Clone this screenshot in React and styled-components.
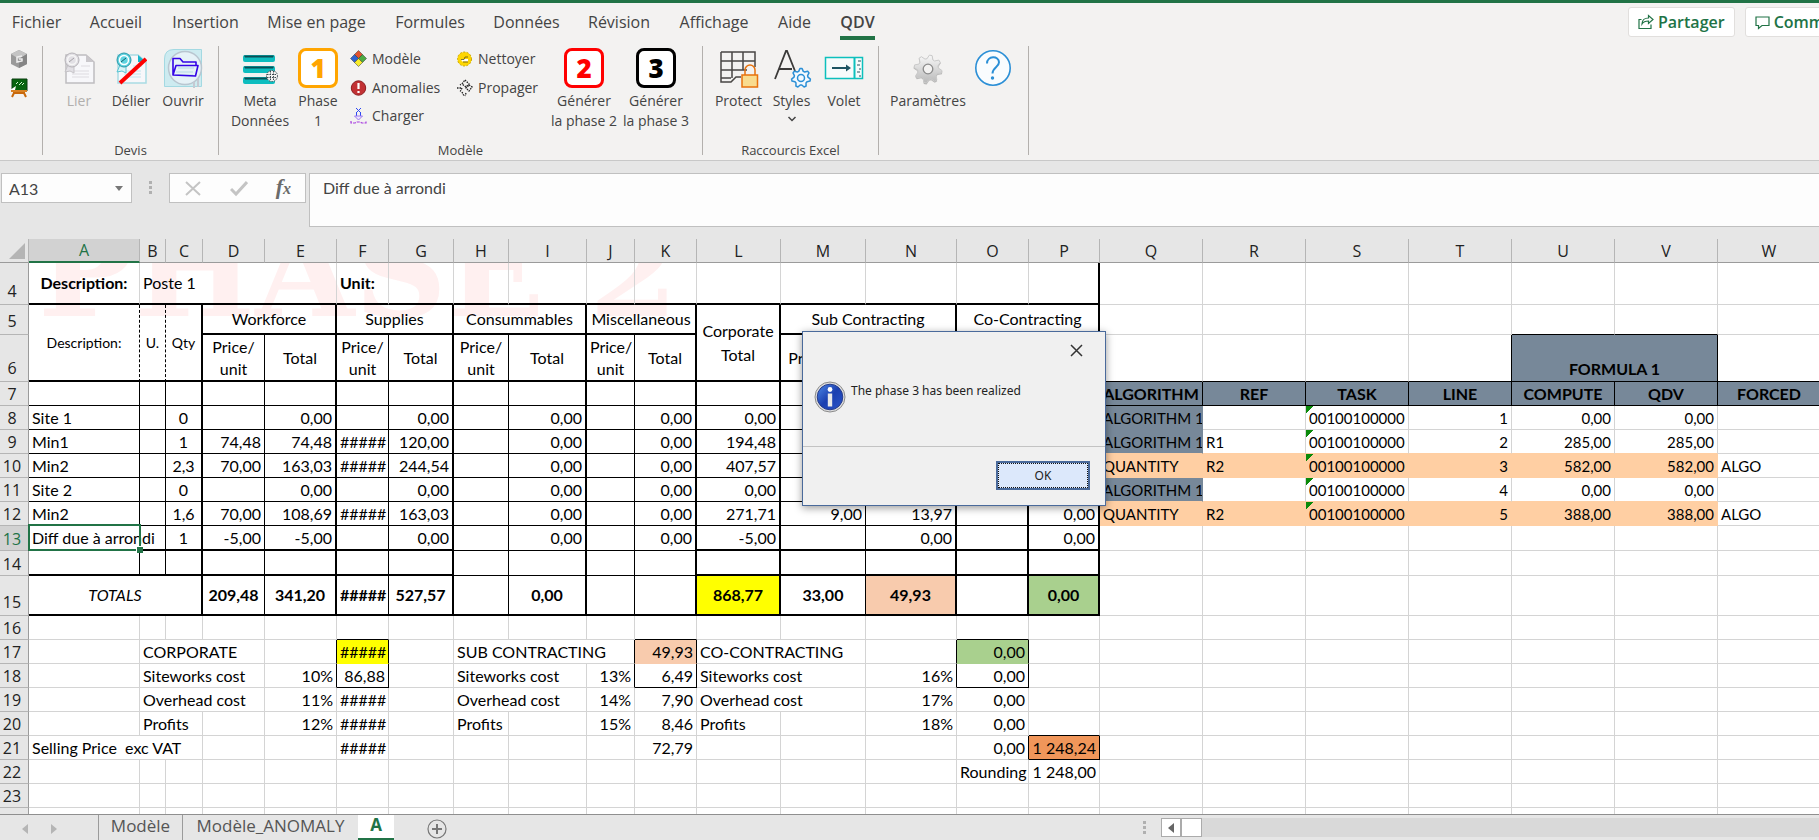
import React from "react";
import styled, { createGlobalStyle, css } from "styled-components";

const GlobalStyle = createGlobalStyle`
  * {
    box-sizing: border-box;
  }
  body {
    margin: 0;
    overflow: hidden;
    font-family: "Open Sans", "Noto Sans", sans-serif;
    color: #444444;
  }
  button,
  input,
  textarea {
    font: inherit;
    color: inherit;
    margin: 0;
    padding: 0;
    border: 0;
    background: none;
    outline: none;
  }
`;

const Window = styled.div`
  position: relative;
  display: flex;
  flex-direction: column;
  height: 100vh;
  background: #e6e6e6;
  overflow: hidden;
`;

/* ---------- ribbon ---------- */

const Ribbon = styled.header`
  flex-shrink: 0;
  height: 161px;
  border-top: 3px solid #217346;
  border-bottom: 1px solid #c8c8c8;
  background: #f3f2f1;
`;

const MenuBar = styled.div`
  display: flex;
  height: 43px;
  overflow: hidden;
`;

const MenuTab = styled.button`
  flex-shrink: 0;
  width: ${(p) => p.$w}px;
  height: 37px;
  font-size: 16px;
  line-height: 36px;
  white-space: nowrap;
  text-align: center;
  span {
    display: inline-block;
    height: 36px;
    ${(p) =>
      p.$active &&
      css`
        font-weight: 600;
        border-bottom: 4px solid #217346;
      `}
  }
`;

const ShareArea = styled.div`
  display: flex;
  flex-shrink: 0;
  gap: 10px;
  width: 191px;
  margin-left: auto;
  padding-top: 4px;
`;

const ShareButton = styled.button`
  display: flex;
  flex-shrink: 0;
  align-items: center;
  gap: 4px;
  height: 30px;
  padding: 0 9px;
  border: 1px solid #e1dfdd;
  border-radius: 3px;
  background: #ffffff;
  color: #217346;
  font-size: 16px;
  font-weight: 600;
  line-height: 20px;
`;

const RibbonBody = styled.div`
  display: flex;
  height: 109px;
`;

const Group = styled.section`
  display: flex;
  flex-direction: column;
  flex-shrink: 0;
  width: ${(p) => p.$w}px;
  border-right: 1px solid #b3b0ad;
  h2 {
    height: 13px;
    margin: auto 0 0;
    font-size: 13px;
    font-weight: 400;
    line-height: 16px;
    text-align: center;
  }
`;

const Tools = styled.div`
  display: flex;
  height: 86px;
  padding-left: ${(p) => p.$pad}px;
`;

const BigTool = styled.button`
  display: flex;
  flex-direction: column;
  flex-shrink: 0;
  align-items: center;
  width: ${(p) => p.$w}px;
  font-size: 14px;
  line-height: 20px;
  white-space: nowrap;
  color: ${(p) => (p.$off ? "#b1afad" : "#444444")};
  svg {
    flex-shrink: 0;
  }
`;

const IconSlot = styled.span`
  display: flex;
  align-items: center;
  justify-content: center;
  height: 44px;
  margin-bottom: 1px;
`;

const SmallColumn = styled.div`
  display: flex;
  flex-direction: column;
  flex-shrink: 0;
  width: ${(p) => p.$w}px;
`;

const SmallTool = styled.button`
  display: flex;
  align-items: center;
  gap: 4px;
  height: 29px;
  padding-bottom: 3px;
  font-size: 14px;
  line-height: 20px;
  white-space: nowrap;
`;

/* ---------- formula bar ---------- */

const FormulaBar = styled.div`
  display: flex;
  flex-shrink: 0;
  align-items: flex-start;
  height: 78px;
  padding: 12px 0 12px 1px;
  font-family: Lato, sans-serif;
  font-size: 16px;
`;

const NameBox = styled.label`
  display: flex;
  align-items: center;
  width: 131px;
  height: 30px;
  padding: 0 8px 0 7px;
  border: 1px solid #c0c0c0;
  background: #fdfdfd;
  input {
    flex: 1;
    min-width: 0;
  }
`;

const Grip = styled.svg`
  margin: 0 16px;
`;

const FxBox = styled.div`
  display: flex;
  justify-content: space-around;
  align-items: center;
  width: 137px;
  height: 30px;
  margin-right: 3px;
  border: 1px solid #c0c0c0;
  background: #fdfdfd;
  button {
    height: 24px;
    line-height: 0;
  }
  i {
    font-family: "Liberation Serif", serif;
    font-size: 22px;
    font-weight: 700;
    line-height: 22px;
    color: #6b6b6b;
  }
  sub {
    font-size: 16px;
    vertical-align: baseline;
  }
`;

const FormulaInput = styled.textarea`
  flex: 1;
  height: 54px;
  padding: 4px 13px;
  border: 1px solid #c0c0c0;
  border-right: 0;
  background: #fdfdfd;
  line-height: 20px;
  resize: none;
`;

/* ---------- sheet ---------- */

const SheetArea = styled.main`
  position: relative;
  flex: 1;
  min-height: 0;
  overflow: hidden;
  background: #ffffff;
  font-family: Lato, sans-serif;
  font-size: 16px;
  color: #000000;
`;

const Watermark = styled.div`
  position: absolute;
  top: 24px;
  left: 38px;
  height: 54px;
  overflow: hidden;
  font-family: "DejaVu Serif", serif;
  font-size: 128px;
  font-weight: 700;
  line-height: 16px;
  white-space: nowrap;
  color: #fff0f0;
`;

/* fixed layout with a tiny width: the columns alone set the table's width */
const Grid = styled.table`
  position: relative;
  width: 1px;
  table-layout: fixed;
  border-collapse: separate;
  border-spacing: 0;
  line-height: 20px;
`;

const ColHead = styled.th`
  height: 24px;
  padding: 0;
  border-right: 1px solid #b5b5b5;
  border-bottom: 1px solid #9b9b9b;
  background: #e6e6e6;
  color: #222222;
  font-family: "Open Sans", "Noto Sans", sans-serif;
  font-size: 16px;
  font-weight: 400;
  line-height: 20px;
  ${(p) =>
    p.$active &&
    css`
      background: #d2d2d2;
      color: #217346;
      border-bottom: 2px solid #217346;
    `}
`;

const Corner = styled(ColHead)`
  text-align: right;
  line-height: 0;
  padding-right: 3px;
`;

const RowHead = styled.th`
  height: ${(p) => p.$h}px;
  padding: 0 4px ${(p) => (p.$h >= 30 ? 2 : 0)}px 0;
  overflow: hidden;
  border-right: 1px solid #9b9b9b;
  border-bottom: 1px solid #b5b5b5;
  background: ${(p) => (p.$active ? "#d2d2d2" : "#e6e6e6")};
  color: ${(p) => (p.$active ? "#217346" : "#222222")};
  font-family: "Open Sans", "Noto Sans", sans-serif;
  font-size: 16px;
  font-weight: 400;
  line-height: ${(p) => (p.$h < 20 ? 4 : 22)}px;
  vertical-align: bottom;
`;

const LINES = {
  grid: "1px solid #d4d4d4",
  thin: "1px solid #000000",
  thick: "2px solid #000000",
  dash: "1px dashed #000000",
};

const line = (kind) => LINES[kind] || `1px solid ${kind}`;

const Cell = styled.td`
  position: relative;
  padding: 0 3px ${(p) => (p.$valign === "bottom" ? 2 : 0)}px;
  overflow: ${(p) => (p.$spill ? "visible" : "hidden")};
  border-right: ${(p) => line(p.$r)};
  border-bottom: ${(p) => line(p.$b)};
  background-color: ${(p) => p.$bg || "transparent"};
  text-align: ${(p) => p.$align || "left"};
  vertical-align: ${(p) => p.$valign || "middle"};
  white-space: pre;
  z-index: ${(p) => (p.$spill ? 2 : "auto")};
  font-weight: ${(p) => (p.$bold ? 700 : 400)};
  font-style: ${(p) => (p.$italic ? "italic" : "normal")};
  font-size: ${(p) => p.$size || 16}px;
  line-height: ${(p) => p.$lh || 20}px;
  ${(p) =>
    p.$flag &&
    css`
      background-image: linear-gradient(135deg, #0a8a0a 5px, transparent 5px);
    `}
`;

const Selection = styled.span`
  position: absolute;
  inset: -2px -2px -2px -1px;
  border: 2px solid #217346;
  &::after {
    content: "";
    position: absolute;
    right: -4px;
    bottom: -4px;
    width: 6px;
    height: 6px;
    border: 1px solid #ffffff;
    border-width: 1px 0 0 1px;
    background: #217346;
  }
`;

/* ---------- sheet tabs ---------- */

const TabBar = styled.footer`
  display: flex;
  flex-shrink: 0;
  height: 26px;
  border-top: 1px solid #8f8f8f;
`;

const TabArrows = styled.div`
  display: flex;
  align-items: center;
  justify-content: space-between;
  width: 98px;
  padding: 2px 41px 0 22px;
  button {
    line-height: 0;
  }
`;

const SheetTab = styled.button`
  height: 25px;
  width: ${(p) => p.$w}px;
  padding-bottom: 4px;
  border-left: ${(p) => (p.$active ? 0 : "1px solid #9b9b9b")};
  border-bottom: ${(p) => (p.$active ? "2px solid #217346" : 0)};
  background: ${(p) => (p.$active ? "#ffffff" : "transparent")};
  color: ${(p) => (p.$active ? "#217346" : "#555555")};
  font-size: 17px;
  font-weight: ${(p) => (p.$active ? 700 : 400)};
  line-height: 18px;
  white-space: nowrap;
`;

const AddTab = styled.button`
  width: 86px;
  line-height: 0;
  padding-top: 2px;
`;

const Scroller = styled.div`
  display: flex;
  align-items: center;
  width: 677px;
  margin-left: auto;
`;

const ScrollArrow = styled.button`
  width: 20px;
  height: 19px;
  border: 1px solid #ababab;
  background: #ffffff;
  line-height: 0;
`;

const Track = styled.div`
  flex: 1;
  height: 19px;
  background: #d9d9d9;
`;

const Thumb = styled.div`
  width: 21px;
  height: 19px;
  border: 1px solid #ababab;
  background: #ffffff;
`;

/* ---------- message box ---------- */

const Dialog = styled.div`
  position: absolute;
  top: 331px;
  left: 802px;
  z-index: 5;
  display: flex;
  flex-direction: column;
  width: 304px;
  height: 175px;
  border: 1px solid #4a6a9b;
  background: #f0f0f0;
  box-shadow: 0 2px 8px rgba(0, 0, 0, 0.4);
  font-family: "Noto Sans", sans-serif;
  font-size: 12px;
  color: #222222;
`;

const DialogTop = styled.div`
  display: flex;
  justify-content: flex-end;
  height: 49px;
  padding: 12px 22px 0 0;
  button {
    height: 13px;
    line-height: 0;
  }
`;

const DialogMessage = styled.div`
  display: flex;
  gap: 5px;
  height: 65px;
  padding-left: 11px;
  p {
    margin: 2px 0 0;
    line-height: 16px;
  }
`;

const DialogFooter = styled.div`
  display: flex;
  flex: 1;
  justify-content: flex-end;
  align-items: flex-start;
  padding: 14px 15px 0 0;
  border-top: 1px solid #c3c3c3;
`;

const OkButton = styled.button`
  width: 94px;
  height: 29px;
  border: 2px solid #4a6a9b;
  background: #dce8fb;
  outline: 1px dotted #111111;
  outline-offset: -3px;
`;

/* ---------- icons ---------- */

const HexIcon = () => (
  <svg width="18" height="20" viewBox="0 0 18 20">
    <path d="M9 1l8 4v10l-8 4-8-4V5z" fill="#9a9a9a" />
    <path d="M9 1l8 4-8 5-8-5z" fill="#c4c4c4" />
    <path d="M9 10l8-5v10l-8 4z" fill="#858585" />
    <path d="M12 7L7 8v5l5-1v-2H9" fill="none" stroke="#eeeeee" strokeWidth="1.5" />
  </svg>
);

const BoardIcon = () => (
  <svg width="18" height="20" viewBox="0 0 18 20">
    <path d="M5 13l-3 6M13 13l3 6M3 15h12" stroke="#c8690c" strokeWidth="2" />
    <path d="M2 1h15v12H2z" fill="#07650f" stroke="#0b3f10" />
    <path d="M6 6l2-2M9 7l3-3M12 7l2-2" stroke="#d7f5d7" />
    <path d="M0 12l6-4-1 4z" fill="#ffffff" />
    <path d="M1 13h16" stroke="#d98223" strokeWidth="2" />
  </svg>
);

const PageIcon = ({ color, cut }) => (
  <svg width="32" height="34" viewBox="0 0 32 34">
    <path d="M3 4h20l8 7v21H3z" fill="#f7f7fa" stroke={color ? "#a9dbe4" : "#bfbdc0"} strokeWidth="1.5" />
    <path d="M23 4v7h8z" fill={color ? "#17b5c9" : "#c9c7cb"} />
    <path d="M9 20h17M9 23h17M9 26h17M18 15h9" stroke={color ? "#c3e4ec" : "#dddbe0"} />
    <path d="M5 14l-3 7 5-1 4 2V14z" fill={color ? "#d9f3f6" : "#e2e0e5"} stroke={color ? "#58c4d2" : "#c5c3c7"} />
    <circle cx="9" cy="9" r="7" fill={color ? "#5fd3e0" : "#e2e0e5"} stroke={color ? "#2a98a8" : "#b5b3b7"} />
    <circle cx="9" cy="9" r="4.5" fill="none" stroke={color ? "#ffffff" : "#f6f6f6"} strokeWidth="1.5" />
    <path d="M6 11l5-4" stroke={color ? "#14606c" : "#a5a3a7"} />
    {cut && <path d="M5 32L31 8" stroke="#fe0000" strokeWidth="4" />}
  </svg>
);

const OpenIcon = () => (
  <svg width="40" height="40" viewBox="0 0 40 40">
    <path d="M1.5 38.5V11Q1.5 1.5 11 1.5H38.5V38.5z" fill="#cdebf0" stroke="#a3d9e2" />
    <circle cx="22" cy="20" r="16.5" fill="#e6f2f7" stroke="#b9c6d0" strokeWidth="1.5" />
    <path d="M31 34v6M35 30v9" stroke="#c5c9d2" strokeWidth="2" />
    <path d="M13 24h17M15 20h16M12 27h18" stroke="#b5d9e6" />
    <path d="M10 27V10.5h7l3 3.5h13v3.5M10 27l3-9.5h22L32.5 28z" fill="none" stroke="#3404e6" strokeWidth="1.6" strokeLinejoin="round" />
  </svg>
);

const MetaIcon = () => (
  <svg width="36" height="36" viewBox="0 0 36 36">
    {[5, 16, 27].map((y) => (
      <g key={y}>
        <rect x="1" y={y} width="32" height="7" rx="2" fill="#0dbdbf" />
        <path d={`M2 ${y + 0.5}h30l-1 2H3z`} fill="#0b4f56" />
      </g>
    ))}
    <circle cx="30" cy="26" r="5.5" fill="#f3f2f1" stroke="#3e4a50" strokeDasharray="1.5 1" />
    <path d="M25 24.5h10M25 27.5h10M28.5 21v10M31.5 21v10" stroke="#3e4a50" strokeDasharray="1.5 1" />
  </svg>
);

const NumberBadge = styled.span`
  display: flex;
  align-items: center;
  justify-content: center;
  width: 40px;
  height: 40px;
  border: 3px solid ${(p) => p.$c};
  border-radius: 8px;
  background: #ffffff;
  color: ${(p) => p.$c};
  font-size: 26px;
  font-weight: 800;
  line-height: 32px;
`;

const DiamondsIcon = () => (
  <svg width="18" height="18" viewBox="0 0 18 18">
    <g stroke="#333333" strokeWidth="0.5">
      <path d="M8.5 0.5l4 4-4 4-4-4z" fill="#e2532e" />
      <path d="M4.500 4.500l4 4-4 4-4-4z" fill="#2f62cf" />
      <path d="M12.5 4.5l4 4-4 4-4-4z" fill="#4caa43" />
      <path d="M8.5 8.5l4 4-4 4-4-4z" fill="#f7ec2d" />
    </g>
  </svg>
);

const AlertIcon = () => (
  <svg width="18" height="18" viewBox="0 0 18 18">
    <circle cx="8.5" cy="9" r="7.2" fill="#c23134" stroke="#8d1d20" />
    <path d="M8.5 4v6M8.5 12v2" stroke="#ffffff" strokeWidth="2.2" />
  </svg>
);

const LoadIcon = () => (
  <svg width="18" height="18" viewBox="0 0 18 18">
    <path d="M6 1l5 5M11 1L6 6M6.5 6v3M10.5 6v3" stroke="#2d49f2" fill="none" />
    <path d="M4.5 9h8l-4 4z" fill="#ece4fc" stroke="#9a78ef" />
    <path d="M1 14v2h4l2-1h3l2 1h4v-2" stroke="#a83ee0" fill="none" strokeWidth="1.2" strokeDasharray="3 1" />
  </svg>
);

const CleanIcon = () => (
  <svg width="18" height="18" viewBox="0 0 18 18">
    <circle cx="8.5" cy="9" r="7" fill="#fed602" stroke="#c9a600" strokeDasharray="2 1.5" />
    <path d="M5 9h7v2.5H6z" fill="#ffffff" />
    <path d="M5 9.5h3l1-2.500h3M7 12h5" fill="none" stroke="#5b4f14" strokeWidth="0.8" />
  </svg>
);

const SpreadIcon = () => (
  <svg width="18" height="18" viewBox="0 0 18 18">
    <g fill="none" stroke="#222222" strokeWidth="1.3" strokeDasharray="1.5 1">
      <path d="M9 1l4 4-3 3-4-3zM13 6l3 2-3 4-3-3zM7 4L4 6" />
      <path d="M1 9h5l-2 4M6 13l2 4M10 14l-1 3" />
    </g>
  </svg>
);

const ProtectIcon = () => (
  <svg width="40" height="40" viewBox="0 0 40 40">
    <path d="M2 4h34v15M2 4v30h10l5-5h5M2 13h34M2 22h26M2 30h10M13 4v26M24 4v18" fill="none" stroke="#484644" strokeWidth="1.5" />
    <path d="M26 27v-5a5 5 0 0 1 10 0v5" fill="none" stroke="#e8720c" strokeWidth="1.5" />
    <rect x="23" y="27" width="15.5" height="12" fill="#f9dc8f" stroke="#e8720c" strokeWidth="1.5" />
  </svg>
);

const gearPath = (cx, cy, r, teeth) => {
  const points = [];
  for (let i = 0; i < teeth * 4; i += 1) {
    const a = ((i + 0.5) * Math.PI * 2) / (teeth * 4);
    const d = i % 4 < 2 ? r : r * 0.74;
    points.push(`${(cx + d * Math.cos(a)).toFixed(1)},${(cy + d * Math.sin(a)).toFixed(1)}`);
  }
  return points.join(" ");
};

const StylesIcon = () => (
  <svg width="40" height="40" viewBox="0 0 40 40">
    <path d="M3 31L14 3h1l8 20M7.5 21H20" fill="none" stroke="#3b3a39" strokeWidth="1.8" />
    <polygon points={gearPath(29, 30, 9.5, 7)} fill="#f3f9fe" stroke="#2b8fd6" strokeWidth="1.5" strokeLinejoin="round" />
    <circle cx="29" cy="30" r="3.5" fill="none" stroke="#2b8fd6" strokeWidth="1.5" />
  </svg>
);

const PaneIcon = () => (
  <svg width="40" height="40" viewBox="0 0 40 40">
    <path d="M1.5 9.5h37v21h-37z" fill="#f7fbfb" stroke="#0cc0bd" strokeWidth="1.5" />
    <path d="M30.5 9.5v21" stroke="#0cc0bd" strokeWidth="2" />
    <path d="M34 13h3M33 17h3M35 21h2M33 24h3M35 28h2" stroke="#24505f" strokeWidth="1.2" />
    <path d="M8 20h16" stroke="#1d5563" strokeWidth="2" />
    <path d="M22 16.5l5 3.5-5 3.5z" fill="#1d5563" />
  </svg>
);

const GearIcon = () => (
  <svg width="34" height="36" viewBox="0 0 34 36">
    <defs>
      <linearGradient id="steel" x1="0" y1="0" x2="0" y2="1">
        <stop offset="0" stopColor="#f8f8f8" />
        <stop offset="1" stopColor="#b9b9b9" />
      </linearGradient>
    </defs>
    <polygon points={gearPath(17, 20, 14.5, 8)} fill="#8f8f8f" opacity="0.6" />
    <polygon points={gearPath(17, 19, 14, 8)} fill="url(#steel)" stroke="#cacaca" strokeLinejoin="round" />
    <circle cx="17" cy="19" r="4.8" fill="#f3f2f1" stroke="#8b8b8b" strokeWidth="1.3" />
  </svg>
);

const HelpIcon = () => (
  <svg width="38" height="38" viewBox="0 0 38 38">
    <circle cx="19" cy="19" r="17.2" fill="#f9fcfe" stroke="#2b8fd6" strokeWidth="1.6" />
    <path d="M13 14.5c0-8 12-8 12-1.2 0 5-6.5 5.2-6.5 11.2" fill="none" stroke="#2b8fd6" strokeWidth="2" />
    <circle cx="18.5" cy="29" r="1.7" fill="#2b8fd6" />
  </svg>
);

const ShareIcon = () => (
  <svg width="16" height="16" viewBox="0 0 16 16" fill="none" stroke="#217346" strokeWidth="1.2">
    <path d="M3.5 5.5H1v9h12v-4" />
    <path d="M4 10c0-4 3-6 6.5-6V1.5L15 5.5l-4.5 4V7C8 7 5.5 7.5 4 10z" />
  </svg>
);

const CommentIcon = () => (
  <svg width="15" height="15" viewBox="0 0 15 15" fill="none" stroke="#217346" strokeWidth="1.2">
    <path d="M1 2h13v8.5H7L3.5 13.5v-3H1z" />
  </svg>
);

const InfoIcon = () => (
  <svg width="32" height="32" viewBox="0 0 32 32">
    <defs>
      <linearGradient id="blue" x1="0" y1="0" x2="1" y2="1">
        <stop offset="0" stopColor="#4f8ae8" />
        <stop offset="0.5" stopColor="#1b3fb0" />
        <stop offset="1" stopColor="#2b55c9" />
      </linearGradient>
    </defs>
    <circle cx="16" cy="16" r="15" fill="#dcdcdc" stroke="#8c8c8c" />
    <circle cx="16" cy="16" r="12.8" fill="url(#blue)" stroke="#2a3f8c" />
    <circle cx="16" cy="8.5" r="2.4" fill="#ffffff" />
    <path d="M16 12.5v13" stroke="#e9e9e9" strokeWidth="4.4" />
  </svg>
);

const Triangle = ({ left, size = 10, color = "#b5b5b5" }) => (
  <svg width={size - 4} height={size} viewBox="0 0 6 10">
    <path d={left ? "M6 0v10L0 5z" : "M0 0v10l6-5z"} fill={color} />
  </svg>
);

const Dots = () => (
  <Grip width="5" height="30" viewBox="0 0 5 30">
    <path d="M1 8h3v3H1zM1 13h3v3H1zM1 18h3v3H1z" fill="#b0b0b0" />
  </Grip>
);

/* ---------- data ---------- */

const MENU = [
  ["Fichier", 73],
  ["Accueil", 86],
  ["Insertion", 93],
  ["Mise en page", 129],
  ["Formules", 98],
  ["Données", 95],
  ["Révision", 90],
  ["Affichage", 100],
  ["Aide", 61],
  ["QDV", 65],
];

const COLUMNS = [
  ["A", 111, "thin"],
  ["B", 26, "thin"],
  ["C", 37, "thick"],
  ["D", 62, "thin"],
  ["E", 72, "thick"],
  ["F", 52, "thin"],
  ["G", 65, "thick"],
  ["H", 55, "thin"],
  ["I", 78, "thick"],
  ["J", 48, "thin"],
  ["K", 62, "thick"],
  ["L", 84, "thick"],
  ["M", 85, "thin"],
  ["N", 91, "thick"],
  ["O", 72, "thick"],
  ["P", 71, "thick"],
  ["Q", 103],
  ["R", 103],
  ["S", 103],
  ["T", 103],
  ["U", 103],
  ["V", 103],
  ["W", 103],
];

const LETTERS = COLUMNS.map(([name]) => name);
const SLATE = "#778899";
const ORANGE = "#ffcfa3";
const YELLOW = "#ffff00";
const PEACH = "#f8cbad";
const GREEN = "#a9d08e";

const right = { align: "right" };
const center = { align: "center" };
const bold = { align: "center", bold: true };

// Costing table on the left: every cell is framed, per column.
const framed = (cells, bottom) => {
  const out = {};
  COLUMNS.slice(0, 16).forEach(([name, , edge]) => {
    const align = name === "A" ? "left" : name === "C" ? "center" : "right";
    out[name] = { align, r: edge, b: bottom(name), t: cells[name] };
  });
  return out;
};

const thinLine = () => "thin";
const closingLine = (name) => ("HIJK".includes(name) ? "thin" : "thick");

// Control table on the right of the sheet.
const control = (algo, ref, number, value, forced) => {
  const bg = forced ? ORANGE : undefined;
  const r = forced ? ORANGE : "grid";
  const fill = { bg, r, b: r, size: 15 };
  return {
    Q: { t: algo, size: 15, bg: bg || SLATE, r: bg || SLATE, b: bg || SLATE },
    R: { t: ref, ...fill },
    S: { t: "00100100000", flag: true, ...fill },
    T: { t: number, ...fill, ...right },
    U: { t: value, ...fill, ...right },
    V: { t: value, ...fill, ...right },
    W: { t: forced ? "ALGO" : "", size: 15 },
  };
};

// A control row that sits on top of an orange one shares its bottom line.
const aboveOrange = (cells) => {
  const out = { ...cells };
  "QRSTUV".split("").forEach((k) => {
    out[k] = { ...out[k], b: ORANGE };
  });
  return out;
};

const priceUnit = { t: "Price/\nunit", align: "center", lh: 22, b: "thick" };
const total = { t: "Total", align: "center", b: "thick" };
const slateHead = (t) => ({ t, bg: SLATE, r: "thin", b: "thin", ...bold });

const row4 = {
  A: { t: "Description:", ...bold },
  B: { t: "Poste 1", span: 4 },
  F: { t: "Unit:", bold: true },
};
LETTERS.slice(0, 16).forEach((k) => {
  row4[k] = { ...row4[k], b: "thick" };
});
row4.P.r = "thick";

const ROWS = [
  { n: 4, h: 42, cells: row4 },
  {
    n: 5,
    h: 30,
    cells: {
      A: { t: "Description:", rows: 2, size: 14, r: "dash", b: "thick", ...center },
      B: { t: "U.", rows: 2, size: 14, r: "dash", b: "thick", ...center },
      C: { t: "Qty", rows: 2, size: 14, r: "thick", b: "thick", ...center },
      D: { t: "Workforce", span: 2, r: "thick", b: "thick", ...center },
      F: { t: "Supplies", span: 2, r: "thick", b: "thick", ...center },
      H: { t: "Consummables", span: 2, r: "thick", b: "thick", ...center },
      J: { t: "Miscellaneous", span: 2, r: "thick", b: "thick", ...center },
      L: { t: "Corporate\nTotal", rows: 2, r: "thick", b: "thick", lh: 24, ...center },
      M: { t: "Sub Contracting", span: 2, r: "thick", b: "thick", ...center },
      O: { t: "Co-Contracting", span: 2, r: "thick", b: "thick", ...center },
      U: { b: "thin" },
      V: { b: "thin" },
    },
  },
  {
    n: 6,
    h: 47,
    skip: "ABCL",
    cells: {
      D: { ...priceUnit, r: "thin" },
      E: { ...total, r: "thick" },
      F: { ...priceUnit, r: "thin" },
      G: { ...total, r: "thick" },
      H: { ...priceUnit, r: "thin" },
      I: { ...total, r: "thick" },
      J: { ...priceUnit, r: "thin" },
      K: { ...total, r: "thick" },
      M: { t: "Price/unit", align: "center", r: "thin", b: "thick" },
      N: { r: "thick", b: "thick" },
      O: { r: "thick", b: "thick" },
      P: { r: "thick", b: "thick" },
      Q: { b: "thin" },
      R: { b: "thin" },
      S: { b: "thin" },
      T: { r: "thin", b: "thin" },
      U: { t: "FORMULA 1", span: 2, bg: SLATE, r: "thin", b: "thin", valign: "bottom", ...bold },
      W: { b: "thin" },
    },
  },
  {
    n: 7,
    h: 24,
    cells: {
      ...framed({}, thinLine),
      Q: slateHead("ALGORITHM"),
      R: slateHead("REF"),
      S: slateHead("TASK"),
      T: slateHead("LINE"),
      U: slateHead("COMPUTE"),
      V: slateHead("QDV"),
      W: slateHead("FORCED"),
    },
  },
  {
    n: 8,
    h: 24,
    cells: {
      ...framed({ A: "Site 1", C: "0", E: "0,00", G: "0,00", I: "0,00", K: "0,00", L: "0,00" }, thinLine),
      ...control("ALGORITHM 1", "", "1", "0,00"),
    },
  },
  {
    n: 9,
    h: 24,
    cells: {
      ...framed(
        { A: "Min1", C: "1", D: "74,48", E: "74,48", F: "#####", G: "120,00", I: "0,00", K: "0,00", L: "194,48" },
        thinLine
      ),
      ...aboveOrange(control("ALGORITHM 1", "R1", "2", "285,00")),
    },
  },
  {
    n: 10,
    h: 24,
    cells: {
      ...framed(
        { A: "Min2", C: "2,3", D: "70,00", E: "163,03", F: "#####", G: "244,54", I: "0,00", K: "0,00", L: "407,57" },
        thinLine
      ),
      ...control("QUANTITY", "R2", "3", "582,00", true),
    },
  },
  {
    n: 11,
    h: 24,
    cells: {
      ...framed({ A: "Site 2", C: "0", E: "0,00", G: "0,00", I: "0,00", K: "0,00", L: "0,00" }, thinLine),
      ...aboveOrange(control("ALGORITHM 1", "", "4", "0,00")),
    },
  },
  {
    n: 12,
    h: 24,
    cells: {
      ...framed(
        {
          A: "Min2",
          C: "1,6",
          D: "70,00",
          E: "108,69",
          F: "#####",
          G: "163,03",
          I: "0,00",
          K: "0,00",
          L: "271,71",
          M: "9,00",
          N: "13,97",
          P: "0,00",
        },
        thinLine
      ),
      ...control("QUANTITY", "R2", "5", "388,00", true),
    },
  },
  {
    n: 13,
    h: 25,
    cells: {
      ...framed(
        { C: "1", D: "-5,00", E: "-5,00", G: "0,00", I: "0,00", K: "0,00", L: "-5,00", N: "0,00", P: "0,00" },
        closingLine
      ),
      A: { t: "Diff due à arrondi", selected: true, r: "thin", b: "thick" },
    },
  },
  { n: 14, h: 25, cells: framed({}, closingLine) },
  {
    n: 15,
    h: 40,
    cells: {
      A: { t: "TOTALS", span: 3, italic: true, r: "thick", b: "thick", ...center },
      D: { t: "209,48", r: "thin", b: "thick", ...bold },
      E: { t: "341,20", r: "thick", b: "thick", ...bold },
      F: { t: "#####", r: "thin", b: "thick", ...bold },
      G: { t: "527,57", r: "thick", b: "thick", ...bold },
      H: { r: "thin", b: "thick" },
      I: { t: "0,00", r: "thick", b: "thick", ...bold },
      J: { r: "thin", b: "thick" },
      K: { r: "thick", b: "thick" },
      L: { t: "868,77", bg: YELLOW, r: "thick", b: "thick", ...bold },
      M: { t: "33,00", r: "thin", b: "thick", ...bold },
      N: { t: "49,93", bg: PEACH, r: "thick", b: "thick", ...bold },
      O: { r: "thick", b: "thick" },
      P: { t: "0,00", bg: GREEN, r: "thick", b: "thick", ...bold },
    },
  },
  { n: 16, h: 24, cells: { F: { b: "thin" }, K: { b: "thin" }, O: { b: "thin" } } },
  {
    n: 17,
    h: 24,
    cells: {
      B: { t: "CORPORATE", span: 3 },
      E: { r: "thin" },
      F: { t: "#####", bg: YELLOW, r: "thin", b: YELLOW, ...right },
      H: { t: "SUB CONTRACTING", span: 3, r: "thin" },
      K: { t: "49,93", bg: PEACH, r: "thin", b: PEACH, ...right },
      L: { t: "CO-CONTRACTING", span: 2 },
      N: { r: "thin" },
      O: { t: "0,00", bg: GREEN, r: "thin", b: GREEN, ...right },
    },
  },
  {
    n: 18,
    h: 24,
    cells: {
      B: { t: "Siteworks cost", span: 3 },
      E: { t: "10%", r: "thin", ...right },
      F: { t: "86,88", r: "thin", b: "thin", ...right },
      H: { t: "Siteworks cost", span: 2 },
      J: { t: "13%", r: "thin", ...right },
      K: { t: "6,49", r: "thin", b: "thin", ...right },
      L: { t: "Siteworks cost", span: 2 },
      N: { t: "16%", r: "thin", ...right },
      O: { t: "0,00", r: "thin", b: "thin", ...right },
    },
  },
  {
    n: 19,
    h: 24,
    cells: {
      B: { t: "Overhead cost", span: 3 },
      E: { t: "11%", ...right },
      F: { t: "#####", ...right },
      H: { t: "Overhead cost", span: 2 },
      J: { t: "14%", ...right },
      K: { t: "7,90", ...right },
      L: { t: "Overhead cost", span: 2 },
      N: { t: "17%", ...right },
      O: { t: "0,00", ...right },
    },
  },
  {
    n: 20,
    h: 24,
    cells: {
      B: { t: "Profits", span: 2 },
      E: { t: "12%", ...right },
      F: { t: "#####", ...right },
      H: { t: "Profits" },
      J: { t: "15%", ...right },
      K: { t: "8,46", ...right },
      L: { t: "Profits" },
      N: { t: "18%", ...right },
      O: { t: "0,00", ...right },
      P: { b: "thin" },
    },
  },
  {
    n: 21,
    h: 24,
    cells: {
      A: { t: "Selling Price  exc VAT", span: 3 },
      F: { t: "#####", ...right },
      K: { t: "72,79", ...right },
      O: { t: "0,00", r: "thin", ...right },
      P: { t: "1 248,24", bg: "#f0965a", r: "thin", b: "thin", ...right },
    },
  },
  { n: 22, h: 24, cells: { O: { t: "Rounding" }, P: { t: "1 248,00", ...right } } },
  { n: 23, h: 24, cells: {} },
  { n: "", h: 8, cells: {} },
];

function SheetRow({ row }) {
  const cells = [];
  for (let i = 0; i < LETTERS.length; i += 1) {
    const name = LETTERS[i];
    if (!(row.skip || "").includes(name)) {
      const c = row.cells[name] || {};
      cells.push(
        <Cell
          key={name}
          colSpan={c.span}
          rowSpan={c.rows}
          $r={c.r || "grid"}
          $b={c.b || "grid"}
          $bg={c.bg}
          $align={c.align}
          $valign={c.valign}
          $bold={c.bold}
          $italic={c.italic}
          $size={c.size}
          $lh={row.h < 20 ? 4 : c.lh}
          $flag={c.flag}
          $spill={c.selected}
        >
          {c.t}
          {c.selected && <Selection />}
        </Cell>
      );
      i += (c.span || 1) - 1;
    }
  }
  return (
    <tr>
      <RowHead scope="row" $h={row.h} $active={row.n === 13}>
        {row.n}
      </RowHead>
      {cells}
    </tr>
  );
}

function Sheet() {
  return (
    <SheetArea>
      <Watermark>
        <span>PHASE 2</span>
      </Watermark>
      <Grid>
        <colgroup>
          <col width="29" />
          {COLUMNS.map(([name, width]) => (
            <col key={name} width={width} />
          ))}
        </colgroup>
        <thead>
          <tr>
            <Corner>
              <svg width="16" height="16" viewBox="0 0 16 16">
                <path d="M16 0v16H0z" fill="#b5b5b5" />
              </svg>
            </Corner>
            {LETTERS.map((name) => (
              <ColHead key={name} scope="col" $active={name === "A"}>
                {name}
              </ColHead>
            ))}
          </tr>
        </thead>
        <tbody>
          {ROWS.map((row) => (
            <SheetRow key={row.n} row={row} />
          ))}
        </tbody>
      </Grid>
    </SheetArea>
  );
}

function Tool({ w, icon, off, label, children }) {
  return (
    <BigTool $w={w} $off={off} disabled={off} aria-label={label}>
      <IconSlot>{icon}</IconSlot>
      {children}
    </BigTool>
  );
}

function App() {
  return (
    <Window>
      <GlobalStyle />
      <Ribbon>
        <MenuBar>
          {MENU.map(([name, width]) => (
            <MenuTab key={name} $w={width} $active={name === "QDV"}>
              <span>{name}</span>
            </MenuTab>
          ))}
          <ShareArea>
            <ShareButton>
              <ShareIcon />
              Partager
            </ShareButton>
            <ShareButton>
              <CommentIcon />
              Commentaires
            </ShareButton>
          </ShareArea>
        </MenuBar>
        <RibbonBody>
          <Group $w={43}>
            <Tools $pad={10}>
              <SmallColumn $w={20}>
                <SmallTool aria-label="Cube">
                  <HexIcon />
                </SmallTool>
                <SmallTool aria-label="Tableau">
                  <BoardIcon />
                </SmallTool>
              </SmallColumn>
            </Tools>
          </Group>
          <Group $w={176}>
            <Tools $pad={10}>
              <Tool w={52} icon={<PageIcon />} off>
                Lier
              </Tool>
              <Tool w={52} icon={<PageIcon color cut />}>
                Délier
              </Tool>
              <Tool w={52} icon={<OpenIcon />}>
                Ouvrir
              </Tool>
            </Tools>
            <h2>Devis</h2>
          </Group>
          <Group $w={484}>
            <Tools $pad={11}>
              <Tool w={60} icon={<MetaIcon />}>
                <span>Meta</span>
                <span>Données</span>
              </Tool>
              <Tool w={56} icon={<NumberBadge $c="#ffa500">1</NumberBadge>}>
                <span>Phase</span>
                <span>1</span>
              </Tool>
              <SmallColumn $w={4} />
              <SmallColumn $w={106}>
                <SmallTool>
                  <DiamondsIcon />
                  Modèle
                </SmallTool>
                <SmallTool>
                  <AlertIcon />
                  Anomalies
                </SmallTool>
                <SmallTool>
                  <LoadIcon />
                  Charger
                </SmallTool>
              </SmallColumn>
              <SmallColumn $w={92}>
                <SmallTool>
                  <CleanIcon />
                  Nettoyer
                </SmallTool>
                <SmallTool>
                  <SpreadIcon />
                  Propager
                </SmallTool>
              </SmallColumn>
              <Tool w={72} icon={<NumberBadge $c="#ff0000">2</NumberBadge>}>
                <span>Générer</span>
                <span>la phase 2</span>
              </Tool>
              <Tool w={72} icon={<NumberBadge $c="#000000">3</NumberBadge>}>
                <span>Générer</span>
                <span>la phase 3</span>
              </Tool>
            </Tools>
            <h2>Modèle</h2>
          </Group>
          <Group $w={176}>
            <Tools $pad={9}>
              <Tool w={53} icon={<ProtectIcon />}>
                Protect
              </Tool>
              <Tool w={53} icon={<StylesIcon />}>
                <span>Styles</span>
                <svg width="10" height="16" viewBox="0 0 10 16">
                  <path d="M1.5 6L5 9.5 8.5 6" fill="none" stroke="#444444" strokeWidth="1.5" />
                </svg>
              </Tool>
              <Tool w={52} icon={<PaneIcon />}>
                Volet
              </Tool>
            </Tools>
            <h2>Raccourcis Excel</h2>
          </Group>
          <Group $w={150}>
            <Tools $pad={9}>
              <Tool w={80} icon={<GearIcon />}>
                Paramètres
              </Tool>
              <Tool w={50} icon={<HelpIcon />} label="Aide" />
            </Tools>
          </Group>
        </RibbonBody>
      </Ribbon>

      <FormulaBar>
        <NameBox>
          <input aria-label="Zone Nom" defaultValue="A13" />
          <svg width="8" height="5" viewBox="0 0 8 5">
            <path d="M0 0h8L4 5z" fill="#777777" />
          </svg>
        </NameBox>
        <Dots />
        <FxBox>
          <button aria-label="Annuler">
            <svg width="18" height="24" viewBox="0 0 18 24">
              <path d="M2 6l14 13M16 6L2 19" stroke="#c4c4c4" strokeWidth="2" />
            </svg>
          </button>
          <button aria-label="Entrer">
            <svg width="18" height="24" viewBox="0 0 18 24">
              <path d="M1 13l5 5L17 6" fill="none" stroke="#c4c4c4" strokeWidth="3" />
            </svg>
          </button>
          <button aria-label="Insérer une fonction">
            <i>
              f<sub>x</sub>
            </i>
          </button>
        </FxBox>
        <FormulaInput aria-label="Barre de formule" defaultValue="Diff due à arrondi" />
      </FormulaBar>

      <Sheet />

      <TabBar>
        <TabArrows>
          <button aria-label="Feuille précédente">
            <Triangle left />
          </button>
          <button aria-label="Feuille suivante">
            <Triangle />
          </button>
        </TabArrows>
        <SheetTab $w={84}>Modèle</SheetTab>
        <SheetTab $w={176}>Modèle_ANOMALY</SheetTab>
        <SheetTab $w={36} $active>
          A
        </SheetTab>
        <AddTab aria-label="Nouvelle feuille">
          <svg width="20" height="20" viewBox="0 0 20 20">
            <circle cx="10" cy="10" r="9" fill="none" stroke="#777777" strokeWidth="1.2" />
            <path d="M10 5v10M5 10h10" stroke="#777777" strokeWidth="2" />
          </svg>
        </AddTab>
        <Scroller>
          <svg width="19" height="19" viewBox="0 0 19 19">
            <path d="M1 3h3v3H1zM1 8h3v3H1zM1 13h3v3H1z" fill="#b0b0b0" />
          </svg>
          <ScrollArrow aria-label="Défiler à gauche">
            <Triangle left color="#666666" />
          </ScrollArrow>
          <Track>
            <Thumb />
          </Track>
        </Scroller>
      </TabBar>

      <Dialog role="dialog" aria-label="Message">
        <DialogTop>
          <button aria-label="Fermer">
            <svg width="13" height="13" viewBox="0 0 13 13">
              <path d="M1 1l11 11M12 1L1 12" stroke="#333333" strokeWidth="1.5" />
            </svg>
          </button>
        </DialogTop>
        <DialogMessage>
          <InfoIcon />
          <p>The phase 3 has been realized</p>
        </DialogMessage>
        <DialogFooter>
          <OkButton>OK</OkButton>
        </DialogFooter>
      </Dialog>
    </Window>
  );
}

export default App;
